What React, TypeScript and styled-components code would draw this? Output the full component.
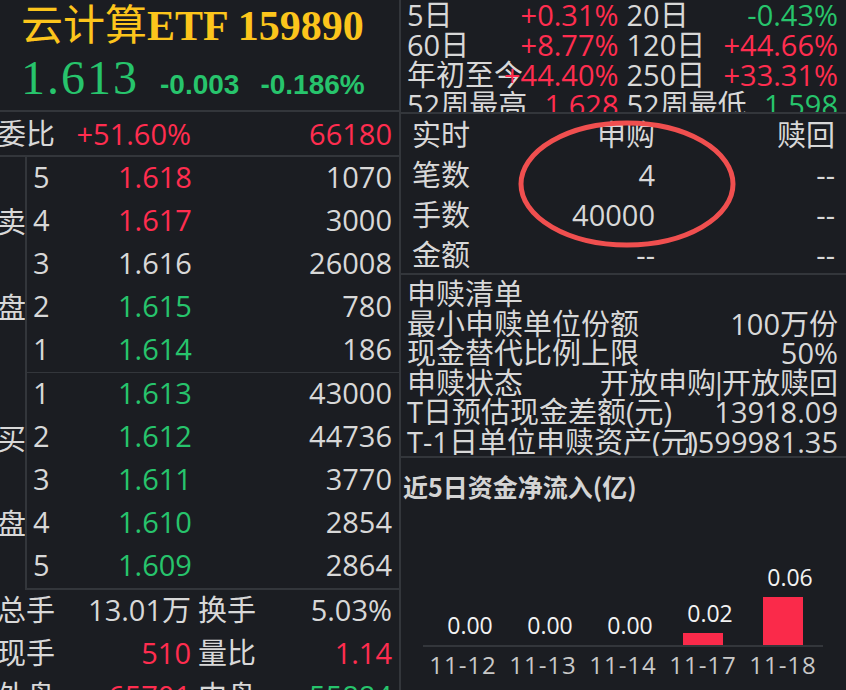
import React from "react";
import styled, { createGlobalStyle, css } from "styled-components";

type Tone = "up" | "down" | "flat";

const Colors = {
  bg: "#1b1d22",
  line: "#33363b",
  text: "#d8d8d8",
  up: "#ff2d4f",
  down: "#27c46c",
  gold: "#fcc51c",
  mark: "#f04f4f",
};

const toneColor = (tone?: Tone) =>
  tone === "up" ? Colors.up : tone === "down" ? Colors.down : Colors.text;

const stats: [string, string, Tone, string, string, Tone][] = [
  ["5日", "+0.31%", "up", "20日", "-0.43%", "down"],
  ["60日", "+8.77%", "up", "120日", "+44.66%", "up"],
  ["年初至今", "+44.40%", "up", "250日", "+33.31%", "up"],
  ["52周最高", "1.628", "up", "52周最低", "1.598", "down"],
];

const sellRows: [number, string, Tone, string][] = [
  [5, "1.618", "up", "1070"],
  [4, "1.617", "up", "3000"],
  [3, "1.616", "flat", "26008"],
  [2, "1.615", "down", "780"],
  [1, "1.614", "down", "186"],
];

const buyRows: [number, string, Tone, string][] = [
  [1, "1.613", "down", "43000"],
  [2, "1.612", "down", "44736"],
  [3, "1.611", "down", "3770"],
  [4, "1.610", "down", "2854"],
  [5, "1.609", "down", "2864"],
];

const summaryRows: [string, string, Tone, string, string, Tone][] = [
  ["总手", "13.01万", "flat", "换手", "5.03%", "flat"],
  ["现手", "510", "up", "量比", "1.14", "up"],
  ["外盘", "65701", "up", "内盘", "55884", "down"],
];

const flowRows = [
  ["实时", "申购", "赎回"],
  ["笔数", "4", "--"],
  ["手数", "40000", "--"],
  ["金额", "--", "--"],
];

const infoRows = [
  ["申赎清单", ""],
  ["最小申赎单位份额", "100万份"],
  ["现金替代比例上限", "50%"],
  ["申赎状态", "开放申购|开放赎回"],
  ["T日预估现金差额(元)", "13918.09"],
  ["T-1日单位申赎资产(元)", "1599981.35"],
];

const netFlow = [
  { date: "11-12", value: "0.00", height: 0 },
  { date: "11-13", value: "0.00", height: 0 },
  { date: "11-14", value: "0.00", height: 0 },
  { date: "11-17", value: "0.02", height: 12 },
  { date: "11-18", value: "0.06", height: 48 },
];

export default function App() {
  const renderSide = (label: [string, string], rows: typeof sellRows, last?: boolean) => (
    <BookSide>
      <SideLabel>
        <span>{label[0]}</span>
        <span>{label[1]}</span>
      </SideLabel>
      <BookRows $last={last}>
        {rows.map(([lvl, price, tone, qty]) => (
          <BookRow key={lvl}>
            <span>{lvl}</span>
            <Value $tone={tone}>{price}</Value>
            <Qty>{qty}</Qty>
          </BookRow>
        ))}
      </BookRows>
    </BookSide>
  );

  // the status value has a narrow bar between its two halves
  const renderInfoValue = (value: string) => {
    const parts = value.split("|");
    if (parts.length < 2) return value;
    return (
      <>
        {parts[0]}
        <Pipe>|</Pipe>
        {parts[1]}
      </>
    );
  };

  return (
    <>
      <GlobalStyle />
      <Screen>
        <LeftCol>
          <Header>
            <Title>
              <TitleCn>云计算</TitleCn>
              <TitleCode>ETF 159890</TitleCode>
            </Title>
            <PriceLine>
              <Price>1.613</Price>
              <Change>-0.003</Change>
              <Change>-0.186%</Change>
            </PriceLine>
          </Header>

          <PairRow $border>
            <PairCell>
              <Label>委比</Label>
              <Value $tone="up">+51.60%</Value>
            </PairCell>
            <PairCell>
              <span />
              <Value $tone="up">66180</Value>
            </PairCell>
          </PairRow>

          {renderSide(["卖", "盘"], sellRows)}
          {renderSide(["买", "盘"], buyRows, true)}

          {summaryRows.map(([l1, v1, t1, l2, v2, t2]) => (
            <PairRow key={l1}>
              <PairCell>
                <Label>{l1}</Label>
                <Value $tone={t1}>{v1}</Value>
              </PairCell>
              <PairCell>
                <span>{l2}</span>
                <Value $tone={t2}>{v2}</Value>
              </PairCell>
            </PairRow>
          ))}
        </LeftCol>

        <RightCol>
          <StatsGrid>
            {stats.map(([l1, v1, t1, l2, v2, t2]) => (
              <React.Fragment key={l1}>
                <StatCell>
                  <span>{l1}</span>
                  <Value $tone={t1}>{v1}</Value>
                </StatCell>
                <StatCell>
                  <span>{l2}</span>
                  <Value $tone={t2}>{v2}</Value>
                </StatCell>
              </React.Fragment>
            ))}
          </StatsGrid>

          <FlowTable>
            {flowRows.map((r) => (
              <FlowRow key={r[0]}>
                <span>{r[0]}</span>
                <Cell>{r[1]}</Cell>
                <Cell>{r[2]}</Cell>
              </FlowRow>
            ))}
            <Mark viewBox="0 0 445 160">
              <ellipse cx="226" cy="70" rx="106" ry="61" fill="none" stroke={Colors.mark} strokeWidth="5" />
            </Mark>
          </FlowTable>

          <InfoList>
            {infoRows.map(([label, value]) => (
              <InfoRow key={label}>
                <span>{label}</span>
                <InfoValue>{renderInfoValue(value)}</InfoValue>
              </InfoRow>
            ))}
          </InfoList>

          <ChartPanel>
            <ChartTitle>近5日资金净流入(亿)</ChartTitle>
            <Plot>
              {netFlow.map((d) => (
                <BarCol key={d.date}>
                  <BarValue>{d.value}</BarValue>
                  <Bar style={{ height: d.height }} />
                </BarCol>
              ))}
            </Plot>
            <Dates>
              {netFlow.map((d) => (
                <DateLabel key={d.date}>{d.date}</DateLabel>
              ))}
            </Dates>
          </ChartPanel>
        </RightCol>
      </Screen>
    </>
  );
}

const GlobalStyle = createGlobalStyle`
  * { box-sizing: border-box; }
  body {
    margin: 0;
    background: ${Colors.bg};
    overflow: hidden;
  }
`;

const Screen = styled.div`
  display: flex;
  width: 846px;
  height: 690px;
  overflow: hidden;
  background: ${Colors.bg};
  color: ${Colors.text};
  font-family: "Open Sans", "Noto Sans CJK SC", sans-serif;
  font-size: 29px;
`;

const LeftCol = styled.div`
  width: 401px;
  flex-shrink: 0;
  border-right: 2px solid ${Colors.line};
  display: flex;
  flex-direction: column;
`;

const Header = styled.div`
  height: 112px;
  flex-shrink: 0;
  border-bottom: 2px solid ${Colors.line};
  padding-left: 21px;
`;

const Title = styled.div`
  color: ${Colors.gold};
  font-family: "Liberation Serif", "Noto Sans CJK SC", serif;
  font-size: 42px;
  line-height: 50px;
  white-space: nowrap;
  margin-top: 1px;
`;

const TitleCn = styled.span`
  font-weight: 400;
`;

const TitleCode = styled.span`
  font-weight: 700;
`;

const PriceLine = styled.div`
  display: flex;
  align-items: baseline;
  gap: 21px;
  margin-top: 3px;
  white-space: nowrap;
`;

const Price = styled.span`
  color: ${Colors.down};
  font-family: "Liberation Serif", serif;
  font-size: 48px;
  line-height: 48px;
  letter-spacing: 2px;
`;

const Change = styled.span`
  color: ${Colors.down};
  font-family: "Liberation Sans", sans-serif;
  font-weight: 700;
  font-size: 28px;
`;

const Value = styled.span<{ $tone?: Tone }>`
  color: ${(p) => toneColor(p.$tone)};
  white-space: nowrap;
`;

const Label = styled.span`
  margin-left: -3px;
`;

const Pipe = styled.span`
  margin: 0 -5px;
`;

const PairRow = styled.div<{ $border?: boolean }>`
  display: grid;
  grid-template-columns: 191px 1fr;
  column-gap: 7px;
  padding-right: 7px;
  height: ${(p) => (p.$border ? "45px" : "43px")};
  line-height: ${(p) => (p.$border ? "43px" : "40px")};
  flex-shrink: 0;
  ${(p) =>
    p.$border &&
    css`
      border-bottom: 2px solid ${Colors.line};
    `}
`;

const PairCell = styled.div`
  display: flex;
  justify-content: space-between;
  white-space: nowrap;
`;

const BookSide = styled.div`
  display: flex;
  flex-shrink: 0;
`;

const SideLabel = styled.div`
  width: 27px;
  flex-shrink: 0;
  border-right: 2px solid ${Colors.line};
  display: flex;
  flex-direction: column;
  justify-content: space-evenly;
  align-items: flex-end;
  line-height: 40px;
  overflow: hidden;
  span {
    margin-right: -1px;
  }
`;

const BookRows = styled.div<{ $last?: boolean }>`
  flex: 1;
  padding: 0 7px 0 6px;
  border-bottom: ${(p) => (p.$last ? "2px" : "1px")} solid ${Colors.line};
`;

const BookRow = styled.div`
  display: grid;
  grid-template-columns: 85px 1fr auto;
  height: 43px;
  line-height: 39px;
`;

const Qty = styled.span`
  text-align: right;
`;

const RightCol = styled.div`
  flex: 1;
  display: flex;
  flex-direction: column;
  min-width: 0;
`;

const StatsGrid = styled.div`
  height: 114px;
  flex-shrink: 0;
  overflow: hidden;
  border-bottom: 2px solid ${Colors.line};
  display: grid;
  grid-template-columns: 1fr 1fr;
  grid-auto-rows: 30px;
  column-gap: 8px;
  padding: 0 8px 0 6px;
  line-height: 30px;
`;

const StatCell = styled.div`
  display: grid;
  white-space: nowrap;
  & > * {
    grid-area: 1 / 1;
  }
  & > :last-child {
    justify-self: end;
  }
`;

const FlowTable = styled.div`
  position: relative;
  height: 161px;
  flex-shrink: 0;
  border-bottom: 2px solid ${Colors.line};
  padding: 1px 11px 0 11px;
`;

const FlowRow = styled.div`
  display: grid;
  grid-template-columns: 100px 1fr 180px;
  height: 40px;
  line-height: 40px;
`;

const Cell = styled.span`
  text-align: right;
`;

const Mark = styled.svg`
  position: absolute;
  left: 0;
  top: 0;
  width: 445px;
  height: 160px;
  pointer-events: none;
`;

const InfoList = styled.div`
  height: 183px;
  flex-shrink: 0;
  overflow: hidden;
  border-bottom: 2px solid ${Colors.line};
  padding: 4px 8px 0 6px;
`;

const InfoRow = styled.div`
  display: grid;
  height: 29.5px;
  line-height: 29.5px;
  white-space: nowrap;
  & > * {
    grid-area: 1 / 1;
  }
`;

const InfoValue = styled.span`
  justify-self: end;
`;

const ChartPanel = styled.div`
  flex: 1;
  display: flex;
  flex-direction: column;
  padding-top: 13px;
`;

const ChartTitle = styled.div`
  font-family: "Noto Sans CJK SC", sans-serif;
  font-weight: 700;
  font-size: 25px;
  line-height: 30px;
  color: #d4d4d4;
  padding-left: 2px;
`;

const Plot = styled.div`
  display: flex;
  align-items: flex-end;
  width: 400px;
  height: 146px;
  margin-left: 22px;
  border-bottom: 2px solid ${Colors.line};
`;

const BarCol = styled.div`
  width: 80px;
  display: flex;
  flex-direction: column;
  align-items: center;
`;

const BarValue = styled.span`
  font-size: 23px;
  line-height: 22px;
  color: #f2f2f2;
  padding-left: 14px;
  margin-bottom: 9px;
`;

const Bar = styled.div`
  width: 40px;
  background: #fa2a4a;
`;

const Dates = styled.div`
  display: flex;
  margin-left: 22px;
  padding-top: 2px;
`;

const DateLabel = styled.span`
  width: 80px;
  text-align: center;
  font-size: 24px;
  line-height: 32px;
  letter-spacing: 1px;
  color: #c8c8c8;
`;
